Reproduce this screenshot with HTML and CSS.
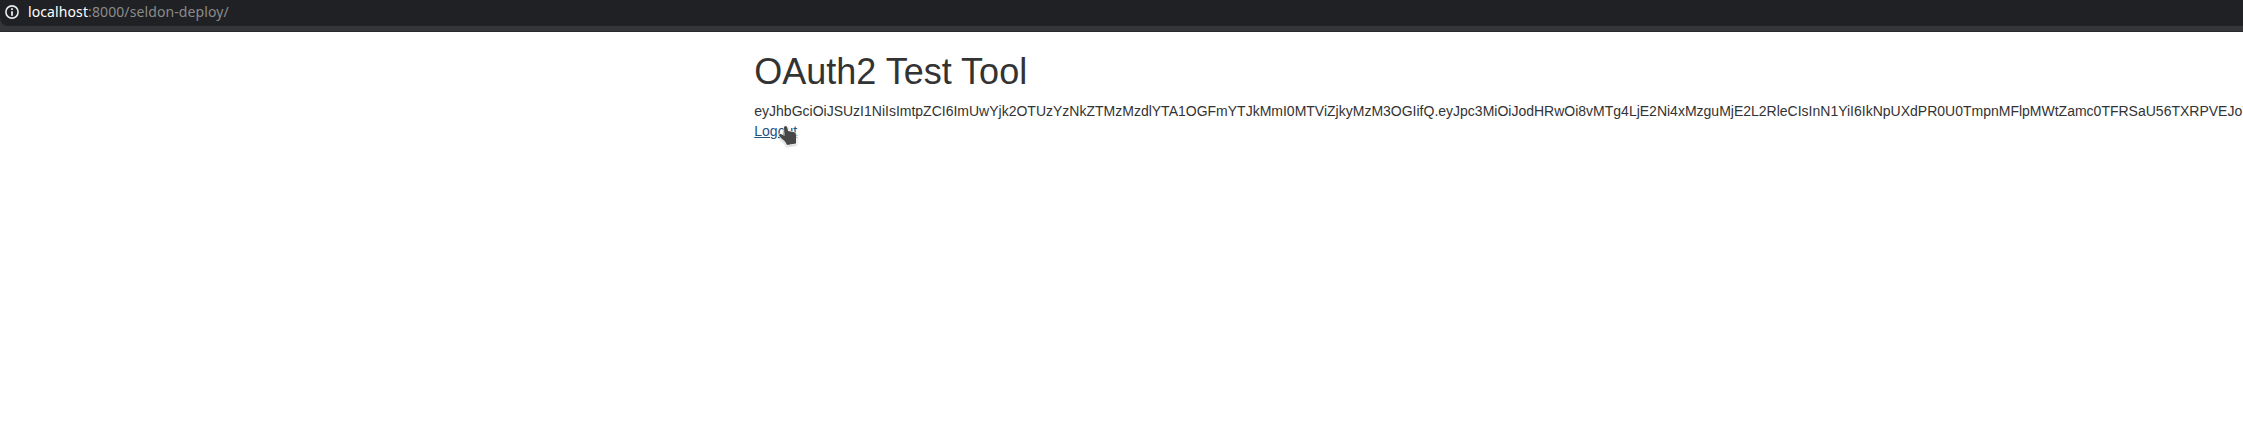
FILE: index.html
```
<!DOCTYPE html>
<html lang="en">
<head>
<meta charset="utf-8">
<title>OAuth2 Test Tool</title>
<link rel="stylesheet" href="styles.css">
</head>
<body>
<header class="toolbar">
  <div class="address">
    <svg class="info" viewBox="0 0 16 16" width="16" height="16"><circle cx="8" cy="8" r="6.1" fill="none" stroke="#e8eaed" stroke-width="1.6"/><path d="M8 4.200v1.800M8 7.200v4.600" stroke="#e8eaed" stroke-width="1.800"/></svg>
    <span class="url"><span class="host">localhost</span>:8000/seldon-deploy/</span>
  </div>
</header>
<main class="content">
  <h1 class="title">OAuth2 Test Tool</h1>
  <div class="token">eyJhbGciOiJSUzI1NiIsImtpZCI6ImUwYjk2OTUzYzNkZTMzMzdlYTA1OGFmYTJkMmI0MTViZjkyMzM3OGIifQ.eyJpc3MiOiJodHRwOi8vMTg4LjE2Ni4xMzguMjE2L2RleCIsInN1YiI6IkNpUXdPR0U0TmpnMFlpMWtZamc0TFRSaU56TXRPVEJoY</div>
  <a class="logout" href="#">Logout</a>
</main>
<svg class="cursor" viewBox="0 0 22 24" width="22" height="24"><path d="M7 4.500Q7 3 8.500 3Q10 3 10.300 4.500L11 8L17.500 9.300Q19 10 19 12V20.500L10 22L8 18.500L4.500 15.500L2 12.500Q2 10.500 3.800 11L7.500 12.800Z" fill="#474747" stroke="#fff" stroke-width="1.200" paint-order="stroke"/></svg>
</body>
</html>
```
FILE: styles.css
```
body {
  margin: 0;
  height: 439px;
  overflow: hidden;
  background: #fff;
  color: #333;
  font: 14px/20px "Liberation Sans", Arial, sans-serif;
}
.toolbar {
  box-sizing: border-box;
  height: 32px;
  background: #35363a;
  border-bottom: 1px solid #292a2d;
}
.address {
  display: flex;
  align-items: center;
  box-sizing: border-box;
  height: 26px;
  padding: 0 0 2px 4px;
  gap: 8px;
  background: #202124;
  border-bottom-left-radius: 8px;
}
.url {
  color: #8b8b8b;
  font: 14px/20px "Noto Sans", sans-serif;
  letter-spacing: 0.1px;
}
.host { color: #fff; }
.content { padding: 20px 0 0 754.3px; }
.title {
  margin: 0 0 10px;
  font-size: 36px;
  font-weight: 500;
  line-height: 39px;
}
.token { white-space: nowrap; }
.logout { color: #23527c; text-decoration: underline; }
.cursor {
  position: absolute;
  left: 777px;
  top: 123px;
  filter: drop-shadow(0 1px 1px rgba(0, 0, 0, .25));
}
```
